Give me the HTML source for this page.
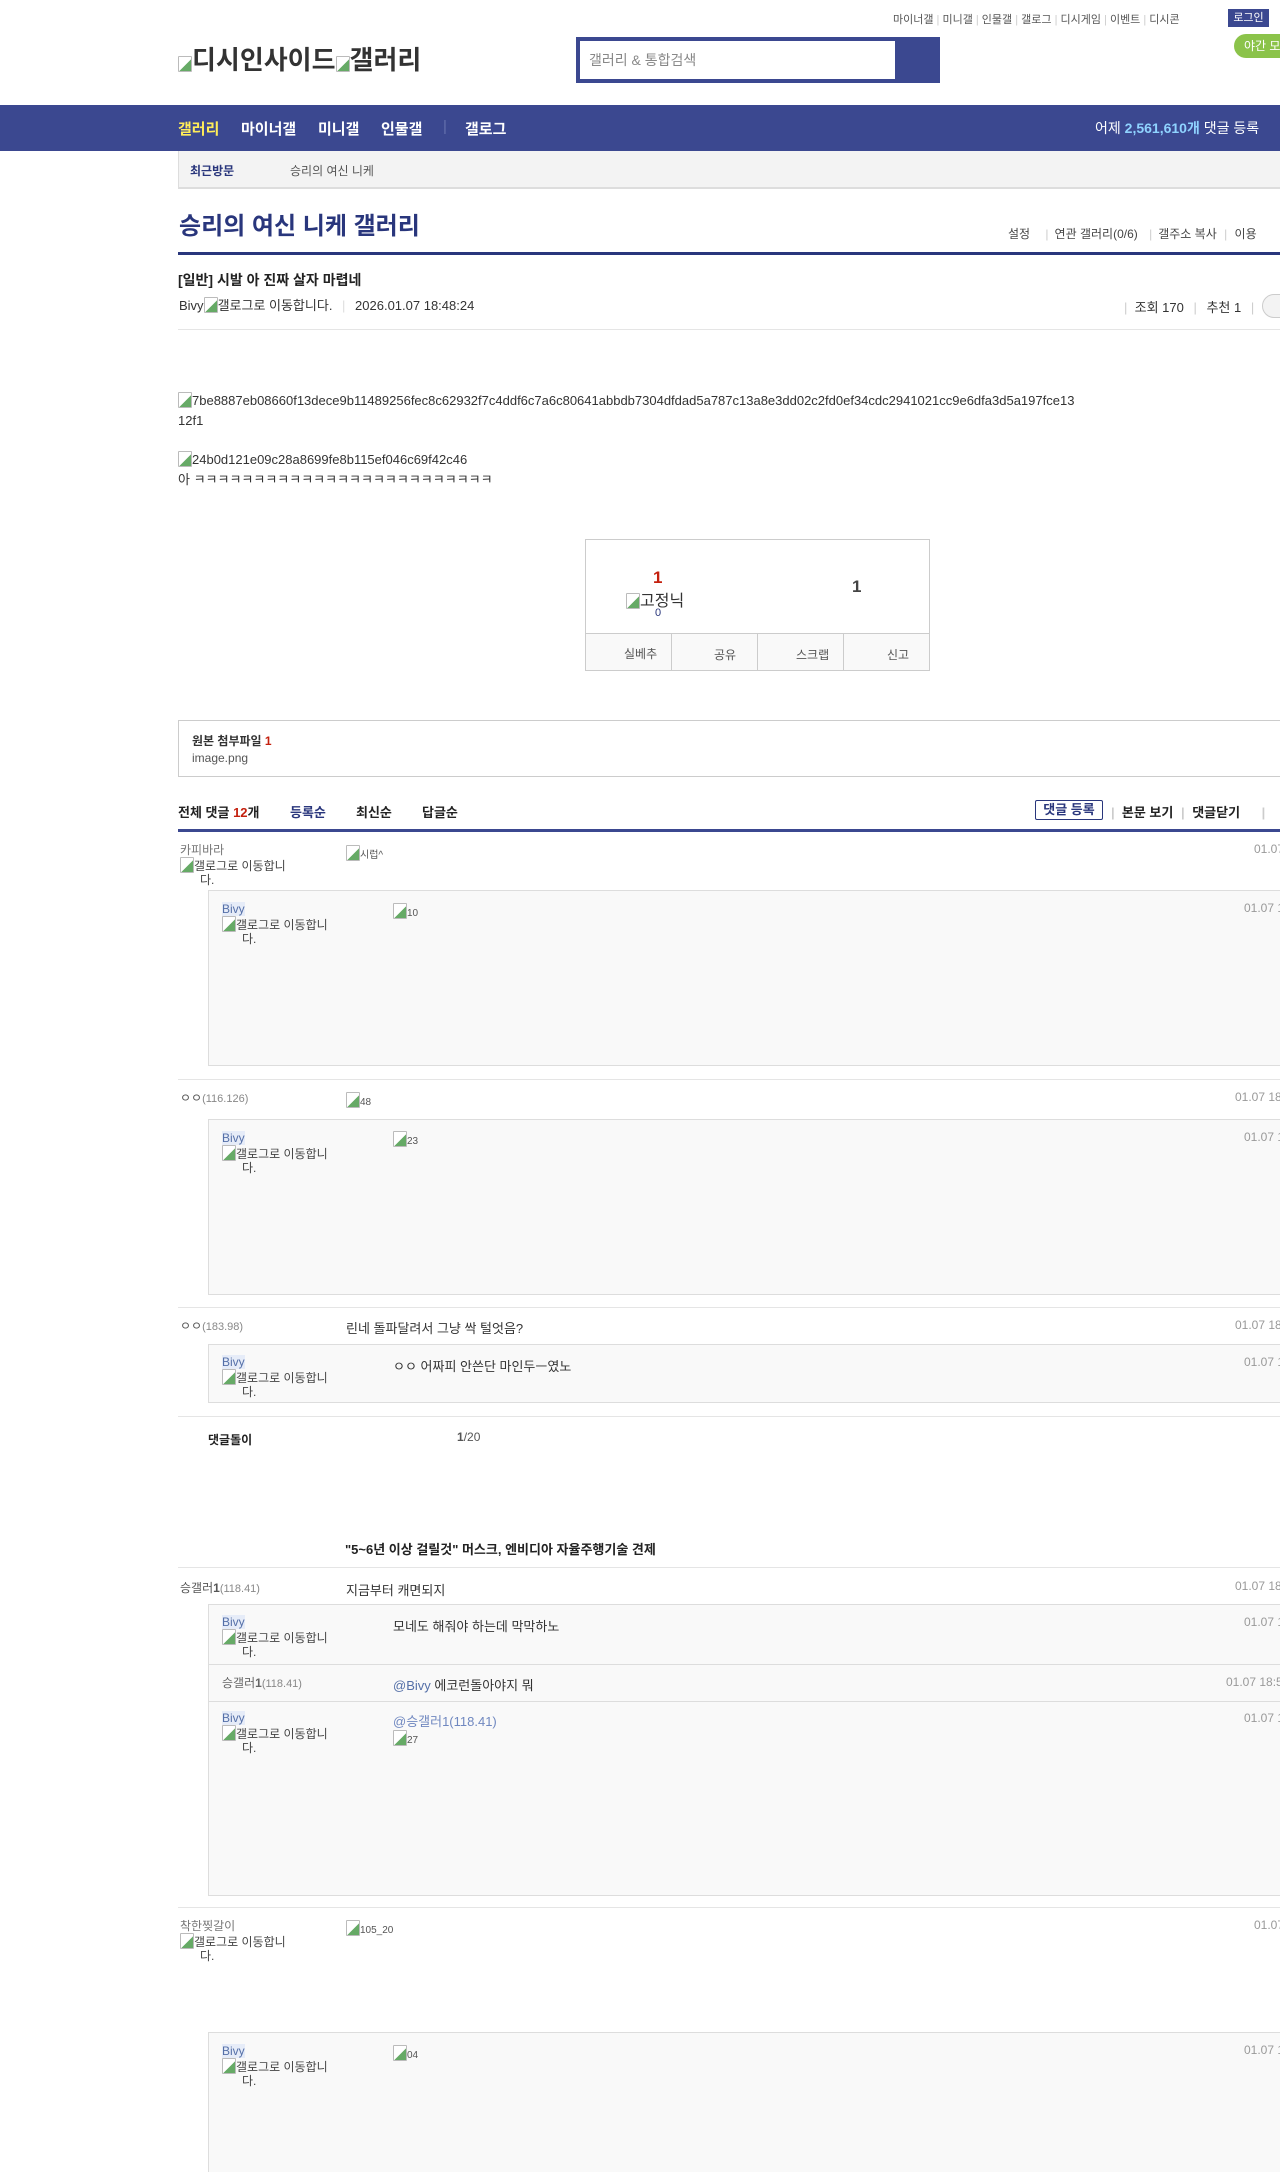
<!DOCTYPE html>
<html><head><meta charset="utf-8">
<style>
*{margin:0;padding:0;box-sizing:border-box}
body{width:1280px;height:2158px;overflow:hidden;position:relative;background:#fff;font-family:"Liberation Sans","Noto Sans CJK KR",sans-serif;font-size:13px;color:#333}
.a{position:absolute;white-space:nowrap}
.bi{display:inline-block;width:14px;height:16px;border:1px solid #bbb;border-radius:1px;vertical-align:-3px;background:linear-gradient(135deg,#fff 55%,#6a6 56%)}
.line{position:absolute;left:178px;right:0;height:1px;background:#e5e5e5}
.rbox{position:absolute;left:208px;right:0;background:#f9f9f9;border-top:1px solid #ddd;border-left:1px solid #ddd;border-bottom:1px solid #ddd}
.nick{font-size:12px;color:#777;line-height:14px}
.nk{font-size:12px;line-height:14px;color:#444}
.date{font-size:12px;color:#999}
.bv{background:#e6ecf8;color:#5570a8}
.nv{position:absolute;top:118px;font-size:15px;font-weight:bold;color:#fff}
</style></head><body>
<div class="a" style="left:893px;top:11px;font-size:11px;color:#555">마이너갤 <span style="color:#ccc">|</span> 미니갤 <span style="color:#ccc">|</span> 인물갤 <span style="color:#ccc">|</span> 갤로그 <span style="color:#ccc">|</span> 디시게임 <span style="color:#ccc">|</span> 이벤트 <span style="color:#ccc">|</span> 디시콘</div>
<div class="a" style="left:1228px;top:9px;width:41px;height:18px;background:#3b4890;color:#fff;font-size:11px;text-align:center;line-height:18px">로그인</div>
<div class="a" style="left:1234px;top:34px;width:60px;height:24px;background:#8bc34a;border-radius:12px;color:#fff;font-size:12px;line-height:24px;padding-left:10px">야간 모드</div>
<div class="a" style="left:178px;top:40px;font-size:26px;font-weight:bold;color:#333"><span class="bi"></span>디시인사이드<span class="bi"></span>갤러리</div>
<div class="a" style="left:576px;top:37px;width:364px;height:46px;background:#3b4890"></div>
<div class="a" style="left:580px;top:41px;width:315px;height:38px;background:#fff;color:#888;font-size:14px;line-height:38px;padding-left:9px">갤러리 &amp; 통합검색</div>
<div class="a" style="left:0;top:105px;width:1280px;height:46px;background:#3b4890"></div>
<div class="nv" style="left:178px;color:#ffed59">갤러리</div>
<div class="nv" style="left:241px">마이너갤</div>
<div class="nv" style="left:318px">미니갤</div>
<div class="nv" style="left:381px">인물갤</div>
<div class="nv" style="left:443px;color:#6571ad;font-weight:normal">|</div>
<div class="nv" style="left:465px">갤로그</div>
<div class="a" style="left:1095px;top:118px;font-size:14px;color:#fff">어제 <b style="color:#8fd3ff">2,561,610개</b> 댓글 등록</div>
<div class="a" style="left:178px;top:151px;right:0;height:38px;background:#f3f3f3;border-left:1px solid #ddd;border-bottom:2px solid #ddd"></div>
<div class="a" style="left:190px;top:162px;font-size:12px;font-weight:bold;color:#29367c">최근방문</div>
<div class="a" style="left:290px;top:162px;font-size:12px;color:#555">승리의 여신 니케</div>
<div class="a" style="left:179px;top:206px;font-size:24px;font-weight:bold;color:#29367c">승리의 여신 니케 갤러리</div>
<div class="a" style="left:1008px;top:225px;font-size:12px;color:#444">설정 <span style="color:#ccc;margin:0 6px 0 12px">|</span>연관 갤러리(0/6) <span style="color:#ccc;margin:0 6px 0 8px">|</span>갤주소 복사 <span style="color:#ccc;margin:0 4px">|</span> 이용</div>
<div class="a" style="left:178px;top:252px;right:0;height:3px;background:#29367c"></div>
<div class="a" style="left:178px;top:270px;font-size:14px;font-weight:bold;color:#222">[일반] 시발 아 진짜 살자 마렵네</div>
<div class="a" style="left:179px;top:295px;font-size:13px;color:#333">Bivy<span class="bi"></span>갤로그로 이동합니다. <span style="color:#ddd;margin:0 6px">|</span> 2026.01.07 18:48:24</div>
<div class="a" style="left:1124px;top:297px;font-size:13px;color:#333"><span style="color:#ccc">|</span>&nbsp; 조회 170 <span style="color:#ccc;margin:0 6px">|</span> 추천 1 <span style="color:#ccc;margin:0 6px">|</span></div>
<div class="a" style="left:1262px;top:294px;width:30px;height:24px;border:1px solid #ccc;border-radius:12px;background:#f3f3f3"></div>
<div class="line" style="top:329px"></div>
<div class="a" style="left:178px;top:391px;font-size:13px;color:#333;line-height:20px"><span class="bi"></span>7be8887eb08660f13dece9b11489256fec8c62932f7c4ddf6c7a6c80641abbdb7304dfdad5a787c13a8e3dd02c2fd0ef34cdc2941021cc9e6dfa3d5a197fce13<br>12f1</div>
<div class="a" style="left:178px;top:450px;font-size:13px;color:#333;line-height:20px"><span class="bi"></span>24b0d121e09c28a8699fe8b115ef046c69f42c46<br>아 ㅋㅋㅋㅋㅋㅋㅋㅋㅋㅋㅋㅋㅋㅋㅋㅋㅋㅋㅋㅋㅋㅋㅋㅋㅋ</div>
<div class="a" style="left:585px;top:539px;width:345px;height:132px;border:1px solid #ccc"></div>
<div class="a" style="left:585px;top:633px;width:345px;height:38px;background:#f9f9f9;border:1px solid #ccc"></div>
<div class="a" style="left:671px;top:634px;width:1px;height:36px;background:#ccc"></div>
<div class="a" style="left:757px;top:634px;width:1px;height:36px;background:#ccc"></div>
<div class="a" style="left:843px;top:634px;width:1px;height:36px;background:#ccc"></div>
<div class="a" style="left:624px;top:645px;font-size:12px;color:#555">실베추</div>
<div class="a" style="left:714px;top:646px;font-size:12px;color:#555">공유</div>
<div class="a" style="left:796px;top:646px;font-size:12px;color:#555">스크랩</div>
<div class="a" style="left:887px;top:646px;font-size:12px;color:#555">신고</div>
<div class="a" style="left:653px;top:568px;font-size:17px;font-weight:bold;color:#c4200e">1</div>
<div class="a" style="left:626px;top:587px;font-size:16px;color:#333"><span class="bi"></span>고정닉</div>
<div class="a" style="left:655px;top:607px;font-size:11px;color:#29367c">0</div>
<div class="a" style="left:852px;top:577px;font-size:17px;font-weight:bold;color:#444">1</div>
<div class="a" style="left:178px;top:720px;right:-2px;height:57px;border:1px solid #ccc"></div>
<div class="a" style="left:192px;top:732px;font-size:12px;font-weight:bold;color:#333">원본 첨부파일 <span style="color:#c4200e">1</span></div>
<div class="a" style="left:192px;top:751px;font-size:12px;color:#555">image.png</div>
<div class="a" style="left:178px;top:802px;font-size:13px;font-weight:bold;color:#222">전체 댓글 <span style="color:#c4200e">12</span>개</div>
<div class="a" style="left:290px;top:802px;font-size:13px;font-weight:bold;color:#29367c">등록순</div>
<div class="a" style="left:356px;top:802px;font-size:13px;font-weight:bold;color:#222">최신순</div>
<div class="a" style="left:422px;top:802px;font-size:13px;font-weight:bold;color:#222">답글순</div>
<div class="a" style="left:1035px;top:800px;width:68px;height:20px;border:1px solid #29367c;border-radius:2px;font-size:13px;font-weight:bold;color:#29367c;text-align:center;line-height:18px">댓글 등록</div>
<div class="a" style="left:1111px;top:802px;font-size:13px;font-weight:bold;color:#222"><span style="color:#ccc">|</span> &nbsp;본문 보기 <span style="color:#ccc;margin:0 4px">|</span> 댓글닫기 <span style="color:#ccc;margin-left:18px">|</span></div>
<div class="a" style="left:178px;top:829px;right:0;height:3px;background:#3b4890"></div>

<div class="a nick" style="left:180px;top:843px">카피바라</div>
<div class="a nk" style="left:180px;top:857px"><span class="bi"></span>갤로그로 이동합니<br>&nbsp;&nbsp;&nbsp;&nbsp;&nbsp;&nbsp;다.</div>
<div class="a" style="left:346px;top:845px;font-size:10px;color:#555"><span class="bi"></span>시럽^</div>
<div class="a date" style="left:1254px;top:842px">01.07</div>
<div class="rbox" style="top:890px;height:176px"></div>
<div class="a nick" style="left:222px;top:902px"><span class="bv">Bivy</span></div>
<div class="a nk" style="left:222px;top:916px"><span class="bi"></span>갤로그로 이동합니<br>&nbsp;&nbsp;&nbsp;&nbsp;&nbsp;&nbsp;다.</div>
<div class="a" style="left:393px;top:903px;font-size:10px;color:#555"><span class="bi"></span>10</div>
<div class="a date" style="left:1244px;top:901px">01.07 1</div>
<div class="line" style="top:1079px"></div>
<div class="a nick" style="left:180px;top:1091px;color:#555">ㅇㅇ<span style="font-size:11px;color:#888">(116.126)</span></div>
<div class="a" style="left:346px;top:1092px;font-size:10px;color:#555"><span class="bi"></span>48</div>
<div class="a date" style="left:1235px;top:1090px">01.07 18</div>
<div class="rbox" style="top:1119px;height:176px"></div>
<div class="a nick" style="left:222px;top:1131px"><span class="bv">Bivy</span></div>
<div class="a nk" style="left:222px;top:1145px"><span class="bi"></span>갤로그로 이동합니<br>&nbsp;&nbsp;&nbsp;&nbsp;&nbsp;&nbsp;다.</div>
<div class="a" style="left:393px;top:1131px;font-size:10px;color:#555"><span class="bi"></span>23</div>
<div class="a date" style="left:1244px;top:1130px">01.07 1</div>
<div class="line" style="top:1307px"></div>
<div class="a nick" style="left:180px;top:1319px;color:#555">ㅇㅇ<span style="font-size:11px;color:#888">(183.98)</span></div>
<div class="a" style="left:346px;top:1318px;font-size:13px;color:#333">린네 돌파달려서 그냥 싹 털엇음?</div>
<div class="a date" style="left:1235px;top:1318px">01.07 18</div>
<div class="rbox" style="top:1344px;height:59px"></div>
<div class="a nick" style="left:222px;top:1355px"><span class="bv">Bivy</span></div>
<div class="a nk" style="left:222px;top:1369px"><span class="bi"></span>갤로그로 이동합니<br>&nbsp;&nbsp;&nbsp;&nbsp;&nbsp;&nbsp;다.</div>
<div class="a" style="left:393px;top:1356px;font-size:13px;color:#333">ㅇㅇ 어짜피 안쓴단 마인두ㅡ였노</div>
<div class="a date" style="left:1244px;top:1355px">01.07 1</div>
<div class="line" style="top:1416px"></div>
<div class="a" style="left:208px;top:1431px;font-size:12px;font-weight:bold;color:#222">댓글돌이</div>
<div class="a" style="left:457px;top:1430px;font-size:12px;color:#555"><b>1</b>/20</div>
<div class="a" style="left:345px;top:1539px;font-size:13px;font-weight:bold;color:#222">"5~6년 이상 걸릴것" 머스크, 엔비디아 자율주행기술 견제</div>
<div class="line" style="top:1567px"></div>
<div class="a nick" style="left:180px;top:1581px;color:#555">승갤러<b>1</b><span style="font-size:11px;color:#888">(118.41)</span></div>
<div class="a" style="left:346px;top:1580px;font-size:13px;color:#333">지금부터 캐면되지</div>
<div class="a date" style="left:1235px;top:1579px">01.07 18</div>
<div class="rbox" style="top:1604px;height:292px"></div>
<div class="a" style="left:208px;top:1664px;right:0;height:1px;background:#ddd"></div>
<div class="a" style="left:208px;top:1701px;right:0;height:1px;background:#ddd"></div>
<div class="a nick" style="left:222px;top:1615px"><span class="bv">Bivy</span></div>
<div class="a nk" style="left:222px;top:1629px"><span class="bi"></span>갤로그로 이동합니<br>&nbsp;&nbsp;&nbsp;&nbsp;&nbsp;&nbsp;다.</div>
<div class="a" style="left:393px;top:1616px;font-size:13px;color:#333">모네도 해줘야 하는데 막막하노</div>
<div class="a date" style="left:1244px;top:1615px">01.07 1</div>
<div class="a nick" style="left:222px;top:1676px;color:#666">승갤러<b>1</b><span style="font-size:11px;color:#888">(118.41)</span></div>
<div class="a" style="left:393px;top:1675px;font-size:13px;color:#333"><span style="color:#5570a8">@Bivy</span> 에코런돌아야지 뭐</div>
<div class="a date" style="left:1226px;top:1675px">01.07 18:5</div>
<div class="a nick" style="left:222px;top:1711px"><span class="bv">Bivy</span></div>
<div class="a nk" style="left:222px;top:1725px"><span class="bi"></span>갤로그로 이동합니<br>&nbsp;&nbsp;&nbsp;&nbsp;&nbsp;&nbsp;다.</div>
<div class="a" style="left:393px;top:1711px;font-size:13px;color:#7088c0">@승갤러1(118.41)</div>
<div class="a" style="left:393px;top:1730px;font-size:10px;color:#555"><span class="bi"></span>27</div>
<div class="a date" style="left:1244px;top:1711px">01.07 1</div>
<div class="line" style="top:1907px"></div>
<div class="a nick" style="left:180px;top:1919px">착한찢갈이</div>
<div class="a nk" style="left:180px;top:1933px"><span class="bi"></span>갤로그로 이동합니<br>&nbsp;&nbsp;&nbsp;&nbsp;&nbsp;&nbsp;다.</div>
<div class="a" style="left:346px;top:1920px;font-size:10px;color:#555"><span class="bi"></span>105_20</div>
<div class="a date" style="left:1254px;top:1918px">01.07</div>
<div class="rbox" style="top:2032px;height:140px;border-bottom:none"></div>
<div class="a nick" style="left:222px;top:2044px"><span class="bv">Bivy</span></div>
<div class="a nk" style="left:222px;top:2058px"><span class="bi"></span>갤로그로 이동합니<br>&nbsp;&nbsp;&nbsp;&nbsp;&nbsp;&nbsp;다.</div>
<div class="a" style="left:393px;top:2045px;font-size:10px;color:#555"><span class="bi"></span>04</div>
<div class="a date" style="left:1244px;top:2043px">01.07 1</div>
</body></html>
